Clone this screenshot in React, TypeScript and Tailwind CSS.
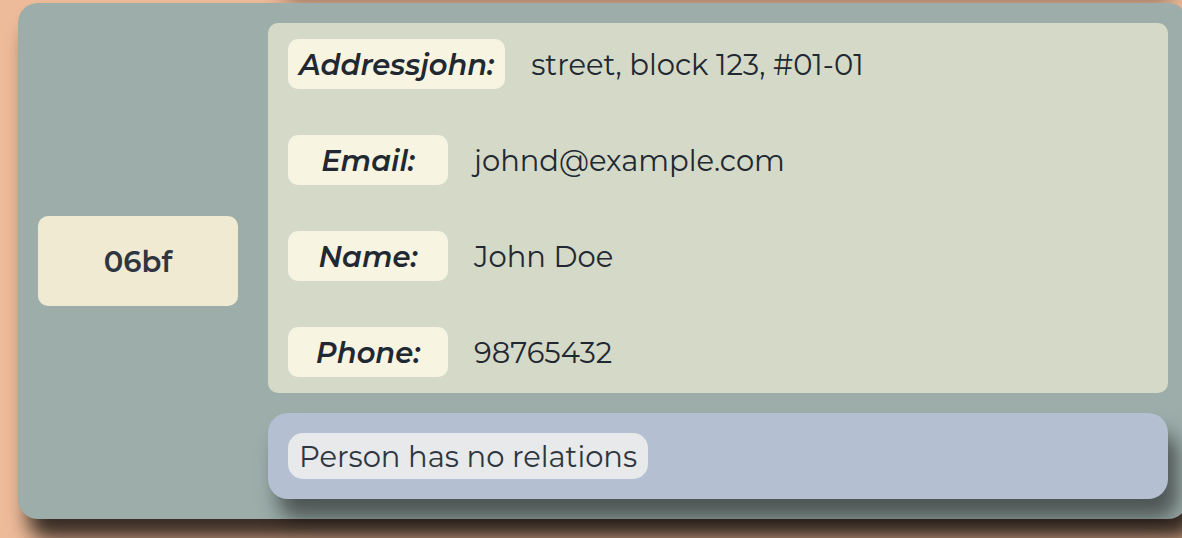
const fields = [
  { label: "Addressjohn:", value: "street, block 123, #01-01" },
  { label: "Email:", value: "johnd@example.com" },
  { label: "Name:", value: "John Doe" },
  { label: "Phone:", value: "98765432" },
];

export default function App() {
  return (
    <main className="flex min-h-screen flex-col overflow-hidden bg-[#eebb9a] font-['Montserrat',Inter,sans-serif] text-[29px] leading-[36px] text-[#212832]">
      {/* Relations panel of the preceding card, scrolled out of view; only its shadow shows */}
      <div className="-mt-[106px] mr-[14px] mb-[23px] ml-[268px] h-[86px] shrink-0 rounded-[20px] shadow-[10px_20px_20px_rgba(0,0,0,0.5)]" />

      <article className="-mr-[6px] ml-[18px] flex items-center gap-[30px] rounded-[20px] bg-[#9cadaa] p-5 shadow-[10px_20px_20px_rgba(0,0,0,0.77)]">
        <h2 className="flex h-[90px] w-[200px] shrink-0 items-center justify-center rounded-[10px] bg-[#f0ead2] pt-0.5 font-semibold text-[#2f363f]">
          06bf
        </h2>

        <div className="flex min-w-0 flex-1 flex-col gap-5">
          <dl className="flex flex-col gap-[46px] rounded-[10px] bg-[#d5dac8] px-5 py-4">
            {fields.map((field) => (
              <div key={field.label} className="flex items-center gap-[26px]">
                <dt className="flex h-[50px] min-w-[160px] items-center justify-center rounded-[10px] bg-[#f7f4e1] px-[11px] pt-0.5 font-semibold italic">
                  {field.label}
                </dt>
                <dd className="pt-0.5">{field.value}</dd>
              </div>
            ))}
          </dl>

          <section className="flex rounded-[20px] bg-[#b4c0d1] p-5 shadow-[10px_20px_20px_rgba(0,0,0,0.5)]">
            <p className="rounded-[15px] bg-[#e7e9eb] px-[11px] pt-1.5 pb-1 text-[#2f363f]">
              Person has no relations
            </p>
          </section>
        </div>
      </article>
    </main>
  );
}
